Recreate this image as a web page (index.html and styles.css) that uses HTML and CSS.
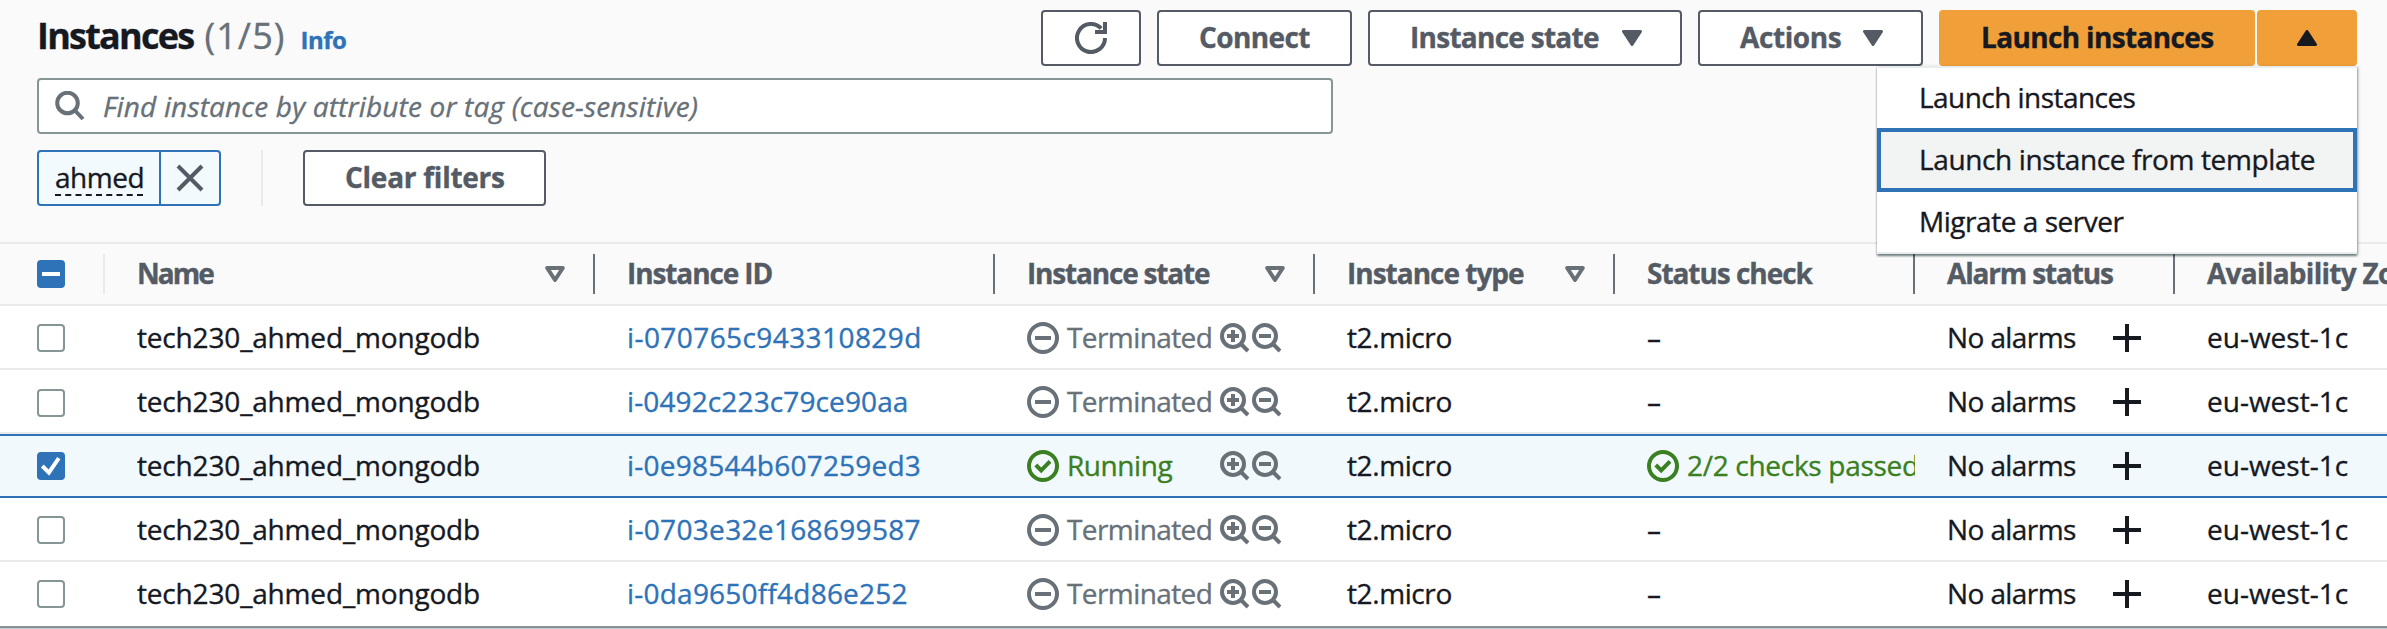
FILE: index.html
```html
<!DOCTYPE html>
<html lang="en">
<head>
<meta charset="utf-8">
<title>Instances</title>
<link rel="stylesheet" href="styles.css">
</head>
<body>
<svg class="defs" aria-hidden="true">
  <symbol id="minus-circle" viewBox="0 0 32 32"><circle cx="16" cy="16" r="14"/><path d="M8 16h16"/></symbol>
  <symbol id="check-circle" viewBox="0 0 32 32"><circle cx="16" cy="16" r="14"/><path d="M8.8 15l5.4 5.4 8.8-9"/></symbol>
  <symbol id="zoom-in" viewBox="0 0 30 30"><circle cx="13" cy="13" r="11"/><path d="M21 21l7 7M13 7v12M7 13h12"/></symbol>
  <symbol id="zoom-out" viewBox="0 0 30 30"><circle cx="13" cy="13" r="11"/><path d="M21 21l7 7M7 13h12"/></symbol>
  <symbol id="plus" viewBox="0 0 28 28"><path d="M14 0v28M0 14h28"/></symbol>
  <symbol id="sort" viewBox="0 0 20 16"><path d="M2.2 2h15.6L10 14z" stroke-linejoin="round"/></symbol>
  <symbol id="caret" viewBox="0 0 20 16"><path d="M1.5 1.5h17L10 14.5z" fill="currentColor" stroke-width="3" stroke-linejoin="round"/></symbol>
</svg>
<main class="panel">
  <header class="toolbar">
    <div class="top">
      <div class="heading">
        <h1 class="title">Instances</h1><span class="count">(1/5)</span><a class="info">Info</a>
      </div>
      <div class="actions">
        <button class="btn btn-icon"><svg class="icon i32" viewBox="0 0 32 32"><path d="M30 16A14 14 0 1 1 26.2 6.4M30 0V10H20"/></svg></button>
        <button class="btn btn-connect"><span class="t-connect">Connect</span></button>
        <button class="btn btn-state"><span class="t-bstate">Instance state</span><svg class="icon caret"><use href="#caret"/></svg></button>
        <button class="btn btn-actions"><span class="t-actions">Actions</span><svg class="icon caret"><use href="#caret"/></svg></button>
        <div class="split">
          <button class="btn primary btn-launch"><span class="t-launch">Launch instances</span></button>
          <button class="btn primary btn-icon"><svg class="icon caret up"><use href="#caret"/></svg></button>
          <ul class="menu">
            <li class="item t-m1">Launch instances</li>
            <li class="item active t-m2">Launch instance from template</li>
            <li class="item t-m3">Migrate a server</li>
          </ul>
        </div>
      </div>
    </div>
    <div class="search">
      <svg class="icon i30" viewBox="0 0 30 30"><circle cx="12.5" cy="12" r="10.3"/><path d="M19.5 19l8.5 9"/></svg>
      <span class="placeholder">Find instance by attribute or tag (case-sensitive)</span>
    </div>
    <div class="filters">
      <div class="token">
        <div class="token-text"><span class="token-label">ahmed</span></div>
        <div class="token-x"><svg class="icon i28" viewBox="0 0 28 28"><path d="M2 2l24 24M26 2L2 26"/></svg></div>
      </div>
      <div class="divider"></div>
      <button class="btn btn-clear"><span class="t-clear">Clear filters</span></button>
    </div>
  </header>
  <section class="table">
    <div class="row head">
      <div class="cell select"><span class="box on"><svg class="mark" viewBox="0 0 28 28"><path d="M5 14h18"/></svg></span></div>
      <div class="cell"><span class="t-name">Name</span><svg class="icon sort"><use href="#sort"/></svg></div>
      <div class="cell"><span class="t-id">Instance ID</span></div>
      <div class="cell"><span class="t-state">Instance state</span><svg class="icon sort"><use href="#sort"/></svg></div>
      <div class="cell"><span class="t-type">Instance type</span><svg class="icon sort"><use href="#sort"/></svg></div>
      <div class="cell"><span class="t-status">Status check</span></div>
      <div class="cell"><span class="t-alarm">Alarm status</span></div>
      <div class="cell"><span class="t-zone">Availability Zone</span></div>
    </div>
    <div class="row">
      <div class="cell select"><span class="box"></span></div>
      <div class="cell name"><span>tech230_ahmed_mongodb</span></div>
      <div class="cell link k5"><span>i-070765c943310829d</span></div>
      <div class="cell state"><svg class="icon i32"><use href="#minus-circle"/></svg><span class="label">Terminated</span><svg class="icon i30"><use href="#zoom-in"/></svg><svg class="icon i30"><use href="#zoom-out"/></svg></div>
      <div class="cell type"><span>t2.micro</span></div>
      <div class="cell"><span>–</span></div>
      <div class="cell alarm"><span>No alarms</span><svg class="icon i28"><use href="#plus"/></svg></div>
      <div class="cell"><span>eu-west-1c</span></div>
    </div>
    <div class="row">
      <div class="cell select low"><span class="box"></span></div>
      <div class="cell name"><span>tech230_ahmed_mongodb</span></div>
      <div class="cell link k2"><span>i-0492c223c79ce90aa</span></div>
      <div class="cell state"><svg class="icon i32"><use href="#minus-circle"/></svg><span class="label">Terminated</span><svg class="icon i30"><use href="#zoom-in"/></svg><svg class="icon i30"><use href="#zoom-out"/></svg></div>
      <div class="cell type"><span>t2.micro</span></div>
      <div class="cell"><span>–</span></div>
      <div class="cell alarm"><span>No alarms</span><svg class="icon i28"><use href="#plus"/></svg></div>
      <div class="cell"><span>eu-west-1c</span></div>
    </div>
    <div class="row selected">
      <div class="cell select"><span class="box on"><svg class="mark" viewBox="0 0 28 28"><path d="M5.3 14l6.6 6.6L21.8 6.2"/></svg></span></div>
      <div class="cell name"><span>tech230_ahmed_mongodb</span></div>
      <div class="cell link k3"><span>i-0e98544b607259ed3</span></div>
      <div class="cell state"><svg class="icon i32 ok"><use href="#check-circle"/></svg><span class="label ok">Running</span><svg class="icon i30"><use href="#zoom-in"/></svg><svg class="icon i30"><use href="#zoom-out"/></svg></div>
      <div class="cell type"><span>t2.micro</span></div>
      <div class="cell checks"><svg class="icon i32"><use href="#check-circle"/></svg><span>2/2 checks passed</span></div>
      <div class="cell alarm"><span>No alarms</span><svg class="icon i28"><use href="#plus"/></svg></div>
      <div class="cell"><span>eu-west-1c</span></div>
    </div>
    <div class="row">
      <div class="cell select"><span class="box"></span></div>
      <div class="cell name"><span>tech230_ahmed_mongodb</span></div>
      <div class="cell link k4"><span>i-0703e32e168699587</span></div>
      <div class="cell state"><svg class="icon i32"><use href="#minus-circle"/></svg><span class="label">Terminated</span><svg class="icon i30"><use href="#zoom-in"/></svg><svg class="icon i30"><use href="#zoom-out"/></svg></div>
      <div class="cell type"><span>t2.micro</span></div>
      <div class="cell"><span>–</span></div>
      <div class="cell alarm"><span>No alarms</span><svg class="icon i28"><use href="#plus"/></svg></div>
      <div class="cell"><span>eu-west-1c</span></div>
    </div>
    <div class="row last">
      <div class="cell select"><span class="box"></span></div>
      <div class="cell name"><span>tech230_ahmed_mongodb</span></div>
      <div class="cell link k3"><span>i-0da9650ff4d86e252</span></div>
      <div class="cell state"><svg class="icon i32"><use href="#minus-circle"/></svg><span class="label">Terminated</span><svg class="icon i30"><use href="#zoom-in"/></svg><svg class="icon i30"><use href="#zoom-out"/></svg></div>
      <div class="cell type"><span>t2.micro</span></div>
      <div class="cell"><span>–</span></div>
      <div class="cell alarm"><span>No alarms</span><svg class="icon i28"><use href="#plus"/></svg></div>
      <div class="cell"><span>eu-west-1c</span></div>
    </div>
  </section>
</main>
</body>
</html>
```
FILE: styles.css
```css
* { box-sizing: border-box; }
body {
  margin: 0;
  height: 629px;
  overflow: hidden;
  font: 28px/38px "Open Sans", "Noto Sans", sans-serif;
  color: #16191f;
  background: #fff;
  -webkit-text-stroke: .35px;
}
.defs { display: none; }
.panel { height: 629px; border-bottom: 1px solid #c5cacd; overflow: hidden; }

/* icons */
.icon { display: block; flex: none; fill: none; stroke: currentColor; stroke-width: 4; }
.i32 { width: 32px; height: 32px; }
.i30 { width: 30px; height: 30px; }
.i28 { width: 28px; height: 28px; }
.caret, .sort { width: 20px; height: 16px; }
.sort { color: #687078; }
.up { transform: scaleY(-1); }

/* toolbar */
.toolbar { height: 244px; padding: 10px 30px 0 37px; background: #fafafa; border-bottom: 2px solid #eaeaea; }
.top { display: flex; justify-content: space-between; height: 56px; }
.heading { display: flex; align-items: baseline; padding-top: 1px; }
.title { margin: 0; font-size: 36px; line-height: 50px; font-weight: 700; letter-spacing: -1.75px; }
.count { margin-left: 11px; font-size: 36px; color: #687078; letter-spacing: 1.1px; }
.info { margin-left: 15px; font-size: 24px; font-weight: 700; color: #2e72b8; letter-spacing: -.5px; }
.actions { display: flex; gap: 16px; }
.btn {
  display: flex; align-items: center; justify-content: space-between;
  height: 56px; padding: 0 38px 0 40px;
  border: 2px solid #545b64; border-radius: 4px; background: #fff;
  font: 700 28px/38px "Open Sans", "Noto Sans", sans-serif; color: #545b64; white-space: nowrap;
}
.btn span { padding-bottom: 2px; }
.btn-icon { width: 100px; padding: 0; justify-content: center; }
.btn-connect { width: 195px; }
.btn-state { width: 314px; }
.btn-actions { width: 225px; }
.btn-launch { width: 316px; }
.btn-clear { width: 243px; }
.primary { border-color: #f19f39; background: #f19f39; color: #16191f; }
.split { position: relative; display: flex; gap: 2px; }
.menu {
  position: absolute; z-index: 2; top: 56px; right: 0; width: 480px; height: 188px;
  margin: 0; padding: 0; list-style: none; background: #fff;
  border-top: 2px solid #eaeded; border-bottom: 2px solid #eaeded;
  box-shadow: 0 2px 2px rgba(0, 28, 36, .45), 1px 1px 3px rgba(0, 28, 36, .3);
}
.item { height: 60px; padding-left: 42px; line-height: 58px; white-space: nowrap; }
.active { height: 64px; padding-left: 38px; line-height: 54px; border: 4px solid #2e72b8; background: #f2f3f3; }
.search {
  display: flex; align-items: center; gap: 18px;
  width: 1296px; height: 56px; margin-top: 12px; padding: 0 16px;
  border: 2px solid #879596; border-radius: 4px; background: #fff; color: #687078;
}
.placeholder { font-style: italic; letter-spacing: .17px; white-space: nowrap; }
.filters { display: flex; height: 56px; margin-top: 16px; }
.token { display: flex; width: 184px; border: 2px solid #2e72b8; border-radius: 4px; background: #f2fafd; }
.token-text { width: 122px; padding: 6px 0 0 16px; border-right: 2px solid #2e72b8; }
.token-label { display: block; width: 88px; height: 38px; border-bottom: 2px dashed #16191f; letter-spacing: -.5px; }
.token-x { display: flex; flex: 1; align-items: center; justify-content: center; color: #545b64; }
.divider { width: 2px; margin: 0 40px; background: #eaeaea; }

/* table */
.row {
  display: grid;
  grid-template-columns: 105px 490px 400px 320px 300px 300px 260px 300px;
  height: 64px;
  box-shadow: inset 0 -2px #eaeaea;
}
.cell { display: flex; align-items: center; overflow: hidden; padding-left: 32px; white-space: nowrap; }
.cell > span:not(.box) { padding-bottom: 2px; }
.select { padding-left: 37px; }
.low { padding-top: 2px; }
.head { height: 62px; padding: 10px 0 12px; background: #fafafa; font-weight: 700; color: #545b64; }
.head .cell { justify-content: space-between; padding-right: 28px; border-right: 2px solid #687078; }
.head .select { border-color: #eaeaea; }
.selected { background: #f2f9fd; box-shadow: inset 0 2px #2e72b8, inset 0 -2px #2e72b8; }
.last { height: 66px; box-shadow: none; border-bottom: 2px solid #879196; }
.box { width: 28px; height: 28px; border: 2px solid #879596; border-radius: 4px; background: #fff; }
.on { border: 0; background: #2e72b8; }
.mark { display: block; width: 28px; height: 28px; fill: none; stroke: #fff; stroke-width: 4; }
.name { letter-spacing: -.17px; }
.link { color: #2e72b8; }
.state { color: #687078; }
.label { width: 153px; margin-left: 8px; letter-spacing: -.59px; }
.state .i30 { margin-right: 2px; }
.label.ok { letter-spacing: -.44px; }
.ok, .checks { color: #3a8020; }
.type { letter-spacing: -.4px; }
.checks span { margin-left: 8px; letter-spacing: -.3px; }
.alarm { justify-content: space-between; padding-right: 34px; letter-spacing: -.6px; }

/* tracking */
.k2 { letter-spacing: .12px; }
.k3 { letter-spacing: .22px; }
.k4 { letter-spacing: .33px; }
.k5 { letter-spacing: .42px; }
.t-connect { letter-spacing: -.6px; }
.t-bstate { letter-spacing: -.73px; }
.t-actions { letter-spacing: -.39px; }
.t-launch { letter-spacing: -.65px; }
.t-m1 { letter-spacing: -.55px; }
.t-m2 { letter-spacing: -.38px; }
.t-m3 { letter-spacing: -.46px; }
.t-clear { letter-spacing: -.26px; }
.t-name { letter-spacing: -2px; }
.t-id { letter-spacing: -1.1px; }
.t-state { letter-spacing: -1.19px; }
.t-type { letter-spacing: -1px; }
.t-status { letter-spacing: -1.04px; }
.t-alarm { letter-spacing: -1.16px; }
.t-zone { letter-spacing: -.72px; }
```
